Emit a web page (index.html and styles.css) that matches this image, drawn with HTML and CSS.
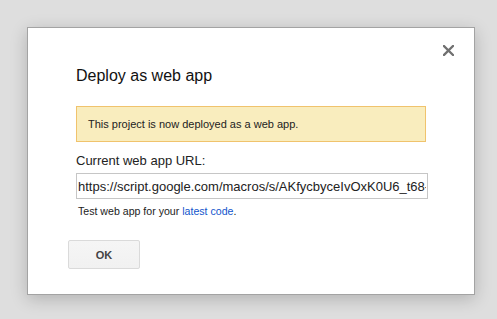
FILE: index.html
```html
<!DOCTYPE html>
<html>
<head>
<meta charset="utf-8">
<link rel="stylesheet" href="styles.css">
</head>
<body>
<div class="dialog">
  <button class="close" aria-label="Close">
    <svg width="11" height="11" viewBox="0 0 11 11"><path d="M1 1L10 10M10 1L1 10" stroke="#707070" stroke-width="2.3" stroke-linecap="square"/></svg>
  </button>
  <div class="title">Deploy as web app</div>
  <div class="notice">This project is now deployed as a web app.</div>
  <div class="label">Current web app URL:</div>
  <input class="url" type="text" value="https://script.google.com/macros/s/AKfycbyceIvOxK0U6_t68-vQ2exampleDeployId/exec" readonly>
  <div class="hint">Test web app for your <a href="#">latest code</a>.</div>
  <div class="buttons"><button class="ok">OK</button></div>
</div>
</body>
</html>
```
FILE: styles.css
```css
html, body {
  margin: 0;
  padding: 0;
}
body {
  width: 497px;
  height: 319px;
  background: #dedede;
  font-family: "Liberation Sans", Arial, sans-serif;
  color: #222;
  overflow: hidden;
  padding-top: 27px;
  padding-left: 27px;
  box-sizing: border-box;
}
.dialog {
  position: relative;
  width: 448px;
  height: 268px;
  box-sizing: border-box;
  background: #fff;
  border: 1px solid #a3a3a3;
  box-shadow: 0 4px 16px rgba(0, 0, 0, 0.2);
  padding: 38px 0 0 48px;
  display: flex;
  flex-direction: column;
  align-items: flex-start;
}
.close {
  position: absolute;
  top: 17px;
  right: 20px;
  width: 11px;
  height: 11px;
  padding: 0;
  margin: 0;
  border: 0;
  background: none;
  display: block;
}
.close svg {
  display: block;
}
.title {
  font-size: 16px;
  line-height: 20px;
  color: #111;
}
.notice {
  margin-top: 20px;
  width: 350px;
  box-sizing: border-box;
  background: #f9edbe;
  border: 1px solid #f0c36d;
  padding: 10px 11px;
  font-size: 11px;
  line-height: 14px;
  color: #222;
}
.label {
  margin-top: 11px;
  font-size: 13px;
  line-height: 16px;
  color: #222;
}
.url {
  margin: 4px 0 0 0;
  width: 352px;
  height: 26px;
  box-sizing: border-box;
  border: 1px solid #c6c6c6;
  border-radius: 0;
  padding: 1px 1px 0 1px;
  font-family: "Liberation Sans", Arial, sans-serif;
  font-size: 13px;
  color: #222;
  background: #fff;
  outline: none;
}
.hint {
  margin-top: 5px;
  padding-left: 2px;
  font-size: 10.6px;
  line-height: 14px;
  color: #222;
}
.hint a {
  color: #1155cc;
  text-decoration: none;
}
.buttons {
  margin-top: 22px;
  margin-left: -8px;
}
.ok {
  width: 72px;
  height: 29px;
  box-sizing: border-box;
  border: 1px solid #dadada;
  border-radius: 2px;
  background: linear-gradient(#f5f5f5, #f1f1f1);
  font-family: "Liberation Sans", Arial, sans-serif;
  font-size: 11px;
  font-weight: bold;
  color: #444;
  padding: 0;
}
```
